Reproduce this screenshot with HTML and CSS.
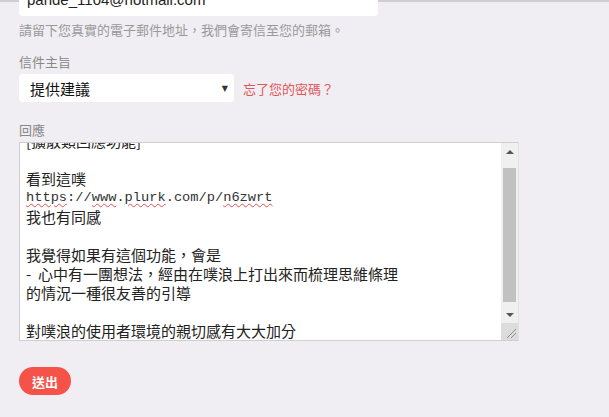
FILE: index.html
```html
<!DOCTYPE html>
<html lang="zh-Hant">
<head>
    <meta charset="UTF-8">
    <meta name="viewport" content="width=device-width, initial-scale=1.0">
    <title>聯絡我們</title>
    <link rel="stylesheet" href="styles.css">
</head>
<body>

    <div class="topline"></div>

    <!-- Contact form -->
    <form class="contact">
        <div class="field email-field">
            <div class="input">pande_1104@hotmail.com</div>
            <p class="hint">請留下您真實的電子郵件地址，我們會寄信至您的郵箱。</p>
        </div>

        <div class="field">
            <label class="label">信件主旨</label>
            <div class="select-row">
                <div class="select">
                    <span>提供建議</span>
                    <span class="caret">&#9660;</span>
                </div>
                <a class="forgot" href="#">忘了您的密碼？</a>
            </div>
        </div>

        <div class="field">
            <label class="label">回應</label>
            <div class="textarea">
                <div class="text">
                    <div class="lines">
                        <div>[擴散類回應功能]</div>
                        <div>&nbsp;</div>
                        <div>看到這噗</div>
                        <div class="url"><span class="typo">https</span>://<span class="typo">www</span>.<span class="typo">plurk</span>.com/p/<span class="typo">n6zwrt</span></div>
                        <div>我也有同感</div>
                        <div>&nbsp;</div>
                        <div>我覺得如果有這個功能，會是</div>
                        <div>-&nbsp; 心中有一團想法，經由在噗浪上打出來而梳理思維條理</div>
                        <div>的情況一種很友善的引導</div>
                        <div>&nbsp;</div>
                        <div>對噗浪的使用者環境的親切感有大大加分</div>
                    </div>
                </div>
                <!-- hand drawn scrollbar -->
                <div class="scrollbar">
                    <div class="arrow up"></div>
                    <div class="track"><div class="thumb"></div></div>
                    <div class="arrow down"></div>
                    <div class="resizer">
                        <svg width="17" height="17" viewBox="0 0 17 17">
                            <line x1="15" y1="6" x2="6" y2="15" stroke="#8a8a8a" stroke-width="1"/>
                            <line x1="15" y1="10" x2="10" y2="15" stroke="#8a8a8a" stroke-width="1"/>
                        </svg>
                    </div>
                </div>
            </div>
        </div>

        <button class="send" type="button">送出</button>
    </form>

</body>
</html>
```

FILE: styles.css
```css
body {
    margin: 0;
    background-color: #f0eef2;
    font-family: 'Noto Sans CJK TC', 'Liberation Sans', sans-serif;
    color: #333;
    overflow: hidden;
}
.topline {
    height: 2px;
    background-color: #cfcdd1;
}
.contact {
    display: flex;
    flex-direction: column;
    align-items: flex-start;
    padding-left: 19px;
    margin-top: -16px; /* page is scrolled a little */
}
.field {
    display: flex;
    flex-direction: column;
    align-items: flex-start;
}
.input {
    position: relative;
    box-sizing: border-box;
    width: 359px;
    height: 30px;
    padding: 0 8px;
    background-color: #fff;
    border-radius: 4px;
    font-family: 'Liberation Sans', Arial, sans-serif;
    font-size: 15px;
    line-height: 28px;
    color: #222;
}
.hint {
    margin: 5px 0 0;
    font-size: 13px;
    line-height: 18px;
    color: #999;
}
.label {
    margin-top: 14px;
    font-size: 13px;
    line-height: 18px;
    color: #888;
}
.field:nth-child(3) .label {
    margin-top: 19px;
}
.select-row {
    display: flex;
    align-items: center;
    gap: 9px;
    margin-top: 3px;
}
.select {
    box-sizing: border-box;
    width: 215px;
    height: 28px;
    padding: 0 6px 0 11px;
    display: flex;
    align-items: center;
    justify-content: space-between;
    background-color: #fff;
    border-radius: 4px;
    font-size: 15px;
    color: #111;
}
.caret {
    font-size: 8px;
    color: #333;
    font-family: 'DejaVu Sans', sans-serif;
}
.forgot {
    font-size: 13px;
    color: #e0575a;
    text-decoration: none;
}
.textarea {
    box-sizing: border-box;
    width: 500px;
    height: 199px;
    margin-top: 3px;
    display: flex;
    background-color: #fff;
    border: 1px solid #cfcfcf;
    border-right-color: #e2e2e2;
}
.text {
    flex: 1;
    overflow: hidden;
    padding: 0 6px;
}
.lines {
    margin-top: -12px;
    font-size: 15px;
    line-height: 19px;
    color: #222;
    white-space: nowrap;
}
.url {
    font-family: 'Liberation Mono', 'DejaVu Sans Mono', monospace;
    font-size: 13.7px;
    color: #333;
}
.typo {
    text-decoration: underline wavy #e05050;
    text-decoration-thickness: 1px;
    text-underline-offset: 2px;
}
.scrollbar {
    width: 17px;
    display: flex;
    flex-direction: column;
    background-color: #f0f0f0;
}
.arrow {
    height: 17px;
    display: flex;
    align-items: center;
    justify-content: center;
}
.arrow::before {
    content: "";
    border-left: 4px solid transparent;
    border-right: 4px solid transparent;
}
.arrow.up::before {
    border-bottom: 4px solid #555;
}
.arrow.down::before {
    border-top: 4px solid #555;
}
.track {
    flex: 1;
    display: flex;
    flex-direction: column;
    padding: 8px 2px 0;
}
.thumb {
    height: 134px;
    background-color: #c1c1c1;
}
.resizer {
    height: 17px;
    background-color: #dcdcdc;
}
.resizer svg {
    display: block;
}
.send {
    margin-top: 26px;
    width: 52px;
    height: 28px;
    padding: 0;
    border: none;
    border-radius: 14px;
    background-color: #f5524a;
    color: #fff;
    font-family: 'Noto Sans CJK TC', sans-serif;
    font-size: 13px;
    font-weight: bold;
    cursor: pointer;
}
```
